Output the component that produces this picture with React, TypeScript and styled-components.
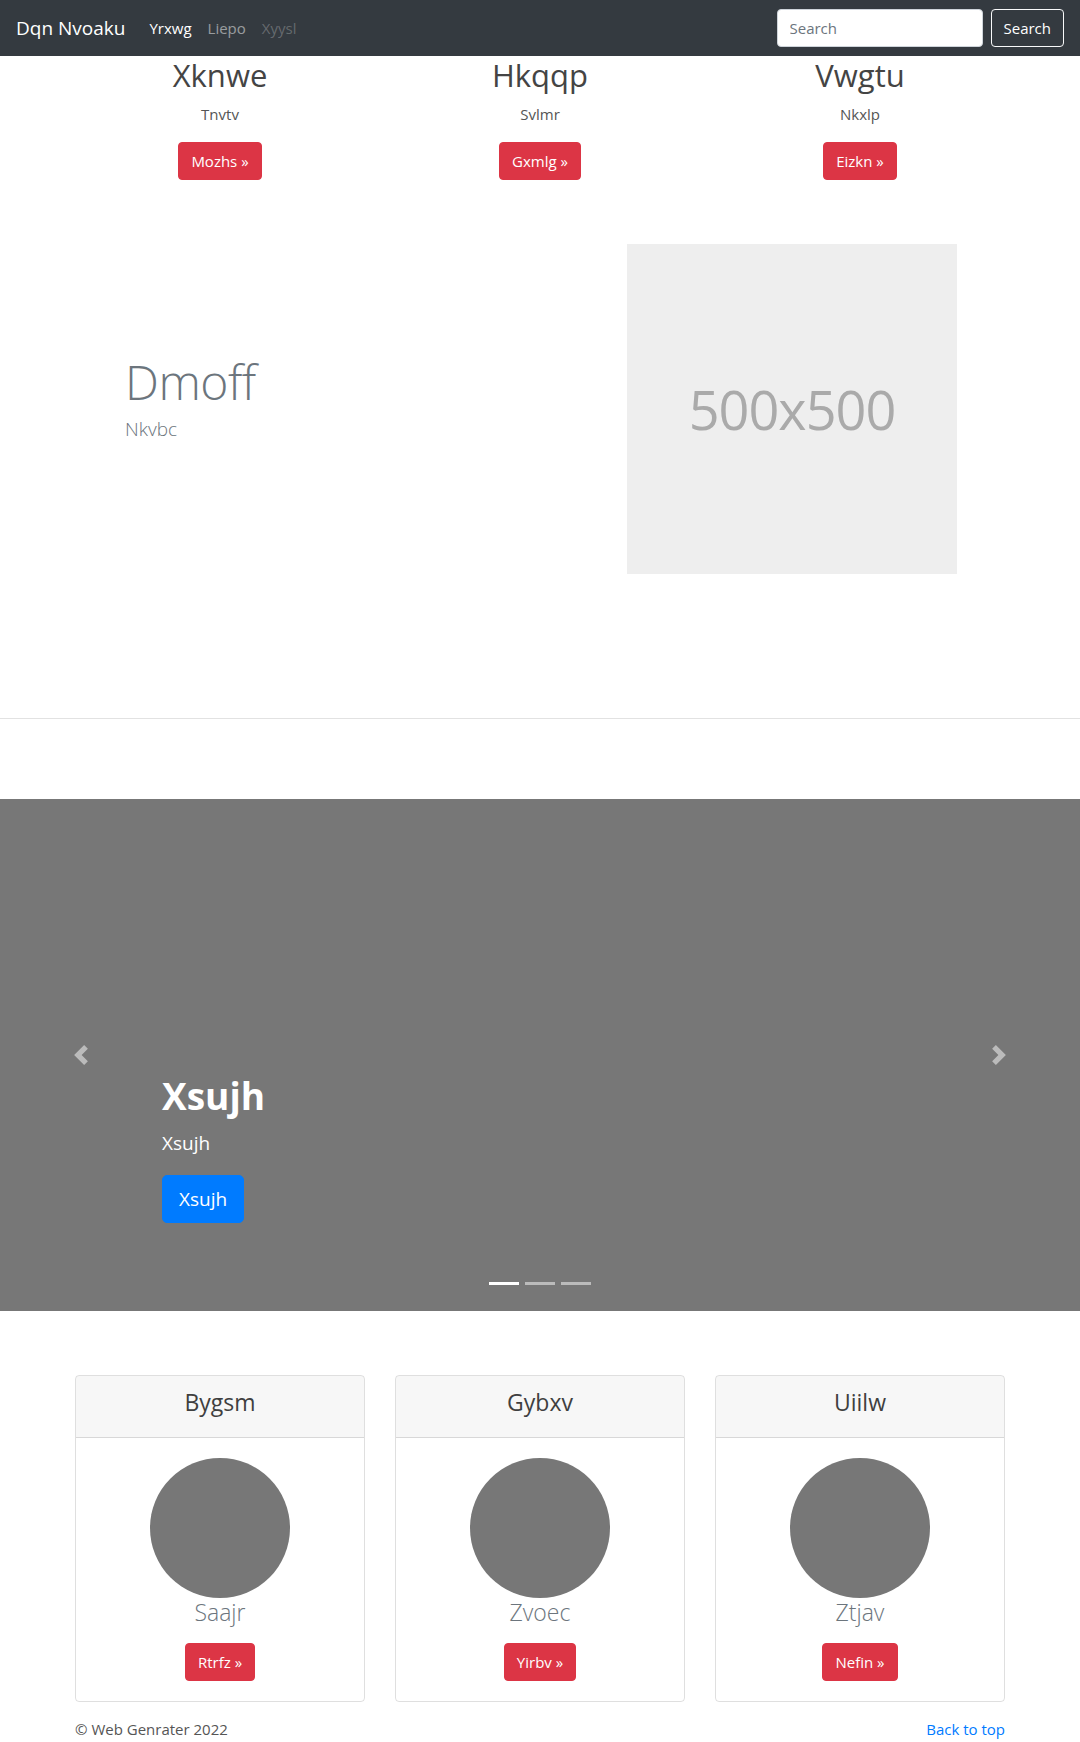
import React from "react";
import styled, { createGlobalStyle } from "styled-components";

const GlobalStyle = createGlobalStyle`
  html, body { margin: 0; padding: 0; background: #fff; }
  body {
    font-family: "Segoe UI", "Open Sans", "Noto Sans", "Liberation Sans", sans-serif;
    font-size: 16px;
    line-height: 1.5;
    color: #555;
  }
  * { box-sizing: border-box; }
`;

const Page = styled.div`
  width: 1080px;
`;

/* ---------- Navbar ---------- */
const NavBar = styled.nav`
  height: 56px;
  background: #343a40;
  display: flex;
  align-items: center;
  padding: 8px 16px;
`;

const Brand = styled.a`
  font-size: 19px;
  line-height: 30px;
  color: #fff;
  margin-right: 16px;
  text-decoration: none;
  white-space: nowrap;
`;

const NavLinks = styled.ul`
  display: flex;
  list-style: none;
  margin: 0;
  padding: 0;
  flex: 1;
`;

const NavLink = styled.a<{ $state: "active" | "normal" | "disabled" }>`
  display: block;
  padding: 8px;
  font-size: 15px;
  text-decoration: none;
  color: ${(p) =>
    p.$state === "active"
      ? "#fff"
      : p.$state === "normal"
      ? "rgba(255,255,255,.5)"
      : "rgba(255,255,255,.25)"};
`;

const SearchForm = styled.form`
  display: flex;
  align-items: center;
  gap: 8px;
`;

const SearchInput = styled.input`
  width: 206px;
  height: 38px;
  padding: 6px 12px;
  font-family: inherit;
  font-size: 15px;
  color: #495057;
  background: #fff;
  border: 1px solid #ced4da;
  border-radius: 4px;
  outline: none;
  &::placeholder { color: #6c757d; }
`;

const OutlineButton = styled.button`
  height: 38px;
  padding: 6px 12px;
  font-family: inherit;
  font-size: 15px;
  color: #fff;
  background: transparent;
  border: 1px solid #f8f9fa;
  border-radius: 4px;
`;

/* ---------- Generic ---------- */
const Container = styled.div`
  width: 960px;
  margin: 0 auto;
  padding: 0 15px;
`;

const ThreeCols = styled.div`
  display: grid;
  grid-template-columns: repeat(3, 1fr);
  column-gap: 30px;
`;

const DangerButton = styled.a`
  display: inline-block;
  padding: 6px 12px;
  font-size: 15px;
  line-height: 24px;
  color: #fff;
  background: #dc3545;
  border: 1px solid #dc3545;
  border-radius: 4px;
  text-decoration: none;
`;

/* ---------- Marketing ---------- */
const MarketCol = styled.div`
  text-align: center;
  margin-bottom: 24px;
`;

const MarketTitle = styled.h2`
  margin: 0 0 8px;
  font-size: 31px;
  font-weight: 400;
  line-height: 38px;
  color: #444;
`;

const MarketText = styled.p`
  margin: 0 0 16px;
  font-size: 15px;
  line-height: 24px;
  color: #555;
`;

/* ---------- Featurette ---------- */
const Featurette = styled.section`
  display: grid;
  grid-template-columns: 1fr 1fr;
  column-gap: 30px;
  align-items: center;
  padding: 40px 0 64px;
`;

const FeatureText = styled.div`
  padding-left: 50px;
`;

const FeatureHeading = styled.h2`
  margin: 0 0 8px;
  font-size: 48px;
  font-weight: 300;
  line-height: 1;
  letter-spacing: -0.5px;
  color: #6c757d;
`;

const FeatureLead = styled.p`
  margin: 0 0 16px;
  font-size: 19px;
  font-weight: 300;
  line-height: 30px;
  color: #6c757d;
`;

const PlaceholderWrap = styled.div`
  padding-left: 72px;
`;

const Placeholder = styled.div`
  width: 330px;
  height: 330px;
  background: #eee;
  color: #aaa;
  display: flex;
  align-items: center;
  justify-content: center;
  font-size: 54px;
  letter-spacing: -1px;
  font-weight: 400;
`;

const Divider = styled.hr`
  margin: 80px 0;
  border: 0;
  border-top: 1px solid #e2e2e2;
  height: 0;
`;

/* ---------- Carousel ---------- */
const Carousel = styled.section`
  position: relative;
  height: 512px;
  background: #777;
`;

const Control = styled.a<{ $side: "left" | "right" }>`
  position: absolute;
  top: 0;
  bottom: 0;
  ${(p) => (p.$side === "left" ? "left: 0;" : "right: 0;")}
  width: 15%;
  display: flex;
  align-items: center;
  justify-content: center;
  opacity: 0.5;
`;

const Caption = styled.div`
  position: absolute;
  left: 15%;
  right: 15%;
  bottom: 48px;
  padding: 20px 0 24px;
  color: #fff;
  text-align: left;
`;

const CaptionTitle = styled.h1`
  margin: 0 0 10px;
  font-size: 37px;
  font-weight: 700;
  line-height: 46px;
`;

const CaptionText = styled.p`
  margin: 0 0 18px;
  font-size: 19px;
  line-height: 28px;
`;

const CaptionAction = styled.p`
  margin: 0 0 16px;
  line-height: 0;
`;

const PrimaryButtonLg = styled.a`
  display: inline-block;
  padding: 8px 16px;
  font-size: 19px;
  line-height: 30px;
  color: #fff;
  background: #007bff;
  border: 1px solid #007bff;
  border-radius: 5px;
  text-decoration: none;
`;

const Indicators = styled.ol`
  position: absolute;
  left: 0;
  right: 0;
  bottom: 16px;
  margin: 0;
  padding: 0;
  list-style: none;
  display: flex;
  justify-content: center;
`;

const Indicator = styled.li<{ $active?: boolean }>`
  width: 30px;
  height: 3px;
  margin: 10px 3px;
  background: #fff;
  opacity: ${(p) => (p.$active ? 1 : 0.5)};
`;

/* ---------- Cards ---------- */
const CardsSection = styled(Container)`
  margin-top: 64px;
`;

const Card = styled.div`
  border: 1px solid rgba(0, 0, 0, 0.125);
  border-radius: 4px;
  text-align: center;
  overflow: hidden;
`;

const CardHeader = styled.div`
  padding: 12px 20px;
  background: rgba(0, 0, 0, 0.03);
  border-bottom: 1px solid rgba(0, 0, 0, 0.125);
`;

const CardTitle = styled.h4`
  margin: 0 0 8px;
  font-size: 23px;
  font-weight: 400;
  line-height: 29px;
  color: #3f3f3f;
`;

const CardBody = styled.div`
  padding: 20px;
  display: flex;
  flex-direction: column;
  align-items: center;
`;

const Avatar = styled.div`
  width: 140px;
  height: 140px;
  border-radius: 50%;
  background: #777;
`;

const CardName = styled.p`
  margin: 0 0 16px;
  font-size: 23px;
  font-weight: 300;
  line-height: 29px;
  color: #6c757d;
`;

/* ---------- Footer ---------- */
const Footer = styled(Container)`
  display: flex;
  justify-content: space-between;
  padding-top: 16px;
`;

const FooterText = styled.p`
  margin: 0 0 16px;
  font-size: 15px;
  color: #555;
`;

const FooterLink = styled.a`
  font-size: 15px;
  color: #007bff;
  text-decoration: none;
`;

const ChevronLeft = () => (
  <svg width="20" height="20" viewBox="0 0 8 8" fill="#fff">
    <path d="M5.25 0l-4 4 4 4 1.5-1.5L4.25 4l2.5-2.5L5.25 0z" />
  </svg>
);

const ChevronRight = () => (
  <svg width="20" height="20" viewBox="0 0 8 8" fill="#fff">
    <path d="M2.75 0l-1.5 1.5L3.75 4l-2.5 2.5L2.75 8l4-4-4-4z" />
  </svg>
);

const marketing = [
  { title: "Xknwe", text: "Tnvtv", btn: "Mozhs" },
  { title: "Hkqqp", text: "Svlmr", btn: "Gxmlg" },
  { title: "Vwgtu", text: "Nkxlp", btn: "Eizkn" },
];

const cards = [
  { title: "Bygsm", name: "Saajr", btn: "Rtrfz" },
  { title: "Gybxv", name: "Zvoec", btn: "Yirbv" },
  { title: "Uiilw", name: "Ztjav", btn: "Nefin" },
];

export default function App() {
  return (
    <Page>
      <GlobalStyle />
      <NavBar>
        <Brand href="#">Dqn Nvoaku</Brand>
        <NavLinks>
          <li><NavLink $state="active" href="#">Yrxwg</NavLink></li>
          <li><NavLink $state="normal" href="#">Liepo</NavLink></li>
          <li><NavLink $state="disabled" href="#">Xyysl</NavLink></li>
        </NavLinks>
        <SearchForm onSubmit={(e) => e.preventDefault()}>
          <SearchInput placeholder="Search" />
          <OutlineButton type="submit">Search</OutlineButton>
        </SearchForm>
      </NavBar>

      <Container>
        <ThreeCols>
          {marketing.map((m) => (
            <MarketCol key={m.title}>
              <MarketTitle>{m.title}</MarketTitle>
              <MarketText>{m.text}</MarketText>
              <DangerButton href="#">{m.btn} »</DangerButton>
            </MarketCol>
          ))}
        </ThreeCols>

        <Featurette>
          <FeatureText>
            <FeatureHeading>Dmoff</FeatureHeading>
            <FeatureLead>Nkvbc</FeatureLead>
          </FeatureText>
          <PlaceholderWrap>
            <Placeholder>500x500</Placeholder>
          </PlaceholderWrap>
        </Featurette>
      </Container>

      <Divider />

      <Carousel>
        <Control $side="left" href="#"><ChevronLeft /></Control>
        <Control $side="right" href="#"><ChevronRight /></Control>
        <Caption>
          <CaptionTitle>Xsujh</CaptionTitle>
          <CaptionText>Xsujh</CaptionText>
          <CaptionAction>
            <PrimaryButtonLg href="#">Xsujh</PrimaryButtonLg>
          </CaptionAction>
        </Caption>
        <Indicators>
          <Indicator $active />
          <Indicator />
          <Indicator />
        </Indicators>
      </Carousel>

      <CardsSection>
        <ThreeCols>
          {cards.map((c) => (
            <Card key={c.title}>
              <CardHeader>
                <CardTitle>{c.title}</CardTitle>
              </CardHeader>
              <CardBody>
                <Avatar />
                <CardName>{c.name}</CardName>
                <DangerButton href="#">{c.btn} »</DangerButton>
              </CardBody>
            </Card>
          ))}
        </ThreeCols>
      </CardsSection>

      <Footer as="footer">
        <FooterText>© Web Genrater 2022</FooterText>
        <FooterLink href="#">Back to top</FooterLink>
      </Footer>
    </Page>
  );
}
